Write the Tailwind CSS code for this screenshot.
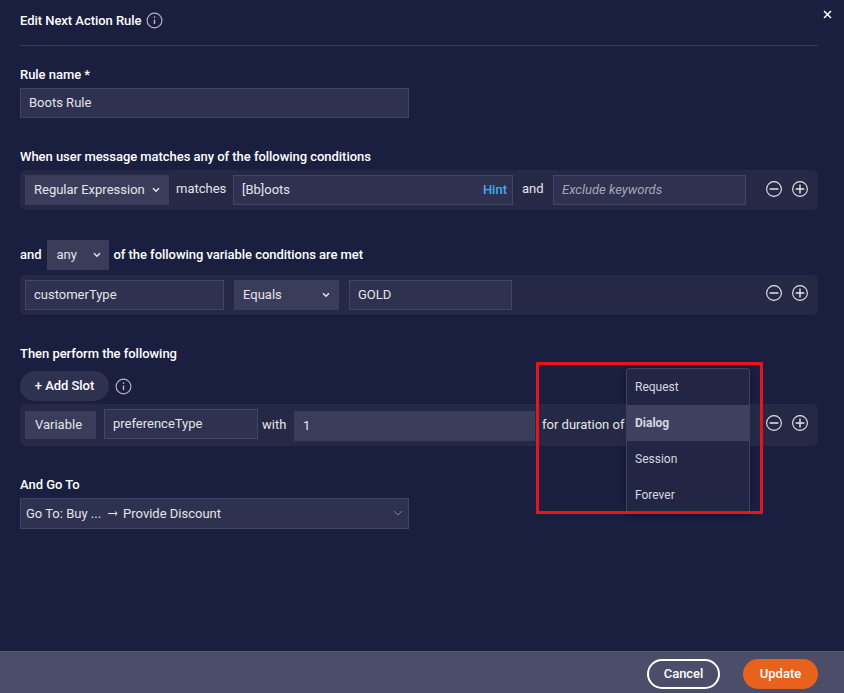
<!DOCTYPE html>
<html lang="en">
<head>
    <meta charset="UTF-8">
    <meta name="viewport" content="width=device-width, initial-scale=1.0">
    <script src="https://cdn.jsdelivr.net/npm/@tailwindcss/browser@4"></script>
    <title>Edit Next Action Rule</title>
</head>
<body class="bg-[#1a1e3f] font-['Roboto',sans-serif] text-[13px] text-[#e4e5ea] w-[844px] h-[693px] overflow-hidden">

<div class="relative flex flex-col h-[693px]">
    <!-- header -->
    <div class="relative h-[46px] w-[798px] ml-5 border-b border-[#3a3d5a] flex items-start pt-[12px]">
        <h2 class="text-[13px] leading-[17px] font-medium text-white tracking-[-0.04px]">Edit Next Action Rule</h2>
        <svg class="ml-[5px] text-[#b4b7c6]" width="17" height="17" viewBox="0 0 17 17" fill="none" stroke="currentColor"><circle cx="8.5" cy="8.5" r="7.4" stroke-width="1.1"/><path d="M8.5 7.5v4.5" stroke-width="1.4"/><path d="M8.5 4.4v1.5" stroke-width="1.4"/></svg>
    </div>
    <svg class="absolute left-[823px] top-[10px]" width="9" height="9" viewBox="0 0 9 9" stroke="#fff" stroke-width="1.5"><path d="M1 1l7 7M8 1l-7 7"/></svg>

    <!-- body -->
    <div class="flex-1 px-5 pt-[20px]">
        <div class="leading-[17px] font-medium text-white h-[22px] tracking-[-0.04px]">Rule name *</div>
        <div class="w-[389px] h-[30px] bg-[#2e3150] border border-[#42456a] pl-[8px] flex items-center">Boots Rule</div>

        <div class="mt-[30px] leading-[17px] font-medium text-white h-[22px] tracking-[-0.04px]">When user message matches any of the following conditions</div>
        <div class="w-[798px] h-[40px] bg-[#262945] rounded-md pl-[5px] flex items-center">
            <div class="w-[144px] h-[30px] bg-[#3a3d5a] pl-[9px] pr-[9px] flex items-center justify-between">
                Regular Expression
                <svg width="8" height="6" viewBox="0 0 8 6" fill="none" stroke="#e4e5ea" stroke-width="1.5"><path d="M1 1.2l3 3 3-3"/></svg>
            </div>
            <span class="ml-[7px] w-[50px] mb-[2px]">matches</span>
            <div class="ml-[7px] w-[280px] h-[30px] bg-[#2e3150] border border-[#42456a] pl-[8px] pr-[5px] flex items-center justify-between">
                [Bb]oots
                <span class="text-[#3bb0ea] font-medium text-[13px]">Hint</span>
            </div>
            <span class="ml-[9px] w-[22px] mb-[2px]">and</span>
            <div class="ml-[9px] w-[193px] h-[30px] bg-[#2e3150] border border-[#42456a] pl-[8px] flex items-center italic text-[#a6a8b6]">Exclude keywords</div>
            <svg class="ml-[20px] mb-[3px]" width="16" height="16" viewBox="0 0 16 16" fill="none" stroke="#e4e5ea" stroke-width="1.1"><circle cx="8" cy="8" r="7.4"/><path d="M3.6 8h8.8" stroke-width="1.5"/></svg>
            <svg class="ml-[10px] mb-[3px]" width="16" height="16" viewBox="0 0 16 16" fill="none" stroke="#e4e5ea" stroke-width="1.1"><circle cx="8" cy="8" r="7.4"/><path d="M3.6 8h8.8M8 3.6v8.8" stroke-width="1.4"/></svg>
        </div>

        <div class="mt-[30px] h-[30px] flex items-center font-medium text-white tracking-[-0.04px]">
            and
            <div class="ml-[6px] w-[62px] h-[30px] bg-[#3a3d5a] pl-[9px] pr-[8px] flex items-center justify-between font-normal text-[#e4e5ea] tracking-normal">
                any
                <svg width="8" height="6" viewBox="0 0 8 6" fill="none" stroke="#e4e5ea" stroke-width="1.5"><path d="M1 1.2l3 3 3-3"/></svg>
            </div>
            <span class="ml-[4px]">of the following variable conditions are met</span>
        </div>
        <div class="mt-[5px] w-[798px] h-[40px] bg-[#262945] rounded-md pl-[5px] flex items-center">
            <div class="w-[199px] h-[30px] bg-[#2e3150] border border-[#42456a] pl-[8px] flex items-center">customerType</div>
            <div class="ml-[10px] w-[105px] h-[30px] bg-[#3a3d5a] pl-[9px] pr-[9px] flex items-center justify-between">
                Equals
                <svg width="8" height="6" viewBox="0 0 8 6" fill="none" stroke="#e4e5ea" stroke-width="1.5"><path d="M1 1.2l3 3 3-3"/></svg>
            </div>
            <div class="ml-[10px] w-[163px] h-[30px] bg-[#2e3150] border border-[#42456a] pl-[8px] flex items-center">GOLD</div>
            <svg class="ml-[254px] mb-[4px]" width="16" height="16" viewBox="0 0 16 16" fill="none" stroke="#e4e5ea" stroke-width="1.1"><circle cx="8" cy="8" r="7.4"/><path d="M3.6 8h8.8" stroke-width="1.5"/></svg>
            <svg class="ml-[10px] mb-[4px]" width="16" height="16" viewBox="0 0 16 16" fill="none" stroke="#e4e5ea" stroke-width="1.1"><circle cx="8" cy="8" r="7.4"/><path d="M3.6 8h8.8M8 3.6v8.8" stroke-width="1.4"/></svg>
        </div>

        <div class="mt-[30px] leading-[17px] font-medium text-white h-[26px] tracking-[-0.04px]">Then perform the following</div>
        <div class="flex items-center h-[30px]">
            <button class="w-[89px] h-[30px] rounded-full bg-[#2e3150] text-white font-medium text-[13px] tracking-[-0.04px]">+ Add Slot</button>
            <svg class="ml-[6px]" width="17" height="17" viewBox="0 0 17 17" fill="none" stroke="#b4b7c6"><circle cx="8.5" cy="8.5" r="7.4" stroke-width="1.1"/><path d="M8.5 7.5v4.5" stroke-width="1.4"/><path d="M8.5 4.4v1.5" stroke-width="1.4"/></svg>
        </div>
        <div class="mt-[3px] w-[798px] h-[42px] bg-[#262945] rounded-md pl-[5px] flex items-center">
            <div class="w-[71px] h-[28px] bg-[#3a3d5a] pl-[10px] flex items-center">Variable</div>
            <div class="ml-[8px] w-[154px] h-[30px] bg-[#2e3150] border border-[#42456a] pl-[8px] flex items-center mb-[2px]">preferenceType</div>
            <span class="ml-[4px] w-[24px]">with</span>
            <div class="ml-[8px] w-[241px] h-[30px] bg-[#3a3d5a] pl-[9px] flex items-center mt-[2px]">1</div>
            <span class="ml-[7px] whitespace-nowrap">for duration of</span>
            <svg class="ml-auto mb-[4px]" width="16" height="16" viewBox="0 0 16 16" fill="none" stroke="#e4e5ea" stroke-width="1.1"><circle cx="8" cy="8" r="7.4"/><path d="M3.6 8h8.8" stroke-width="1.5"/></svg>
            <svg class="ml-[10px] mr-[10px] mb-[4px]" width="16" height="16" viewBox="0 0 16 16" fill="none" stroke="#e4e5ea" stroke-width="1.1"><circle cx="8" cy="8" r="7.4"/><path d="M3.6 8h8.8M8 3.6v8.8" stroke-width="1.4"/></svg>
        </div>

        <div class="mt-[30px] leading-[17px] font-medium text-white h-[22px] tracking-[-0.04px]">And Go To</div>
        <div class="w-[389px] h-[31px] bg-[#2e3150] border border-[#42456a] pl-[5px] pr-[5px] flex items-center justify-between">
            <span class="flex items-center">Go To: Buy ...
                <svg class="ml-[7px] mr-[5px]" width="10" height="7" viewBox="0 0 10 7" fill="none" stroke="#e4e5ea"><path d="M0 3.5h9" stroke-width="1"/><path d="M7 1.5l2.2 2-2.2 2" stroke-width="1"/></svg>
                Provide Discount</span>
            <svg width="10" height="7" viewBox="0 0 10 7" fill="none" stroke="#7c7e94" stroke-width="1"><path d="M1 1l4 4 4-4"/></svg>
        </div>
    </div>

    <!-- footer -->
    <div class="h-[42px] bg-[#4b4d69] border-t border-[#5b5d78] flex items-start pt-[7px] justify-end pr-[26px] gap-[23px]">
        <button class="w-[73px] h-[30px] rounded-full border-2 border-white text-white font-medium tracking-[-0.04px]">Cancel</button>
        <button class="w-[75px] h-[30px] rounded-full bg-[#e8621d] text-white font-medium">Update</button>
    </div>

    <!-- dropdown menu, clipped by the annotation box -->
    <div class="absolute left-[626px] top-[368px] w-[124px] h-[145px] overflow-hidden bg-[#232544] border border-b-0 border-[#3f4260] rounded-t shadow-md shadow-black/20 text-[12px] text-[#d8d9e2]">
        <div class="h-[36px] pl-[8px] flex items-center">Request</div>
        <div class="h-[36px] pl-[8px] flex items-center bg-[#3e4060] font-bold">Dialog</div>
        <div class="h-[36px] pl-[8px] flex items-center">Session</div>
        <div class="h-[36px] pl-[8px] flex items-center">Forever</div>
    </div>

    <!-- red annotation box -->
    <div class="absolute left-[536px] top-[362px] w-[227px] h-[152px] border-[3px] border-[#e8141a]"></div>
</div>

</body>
</html>
